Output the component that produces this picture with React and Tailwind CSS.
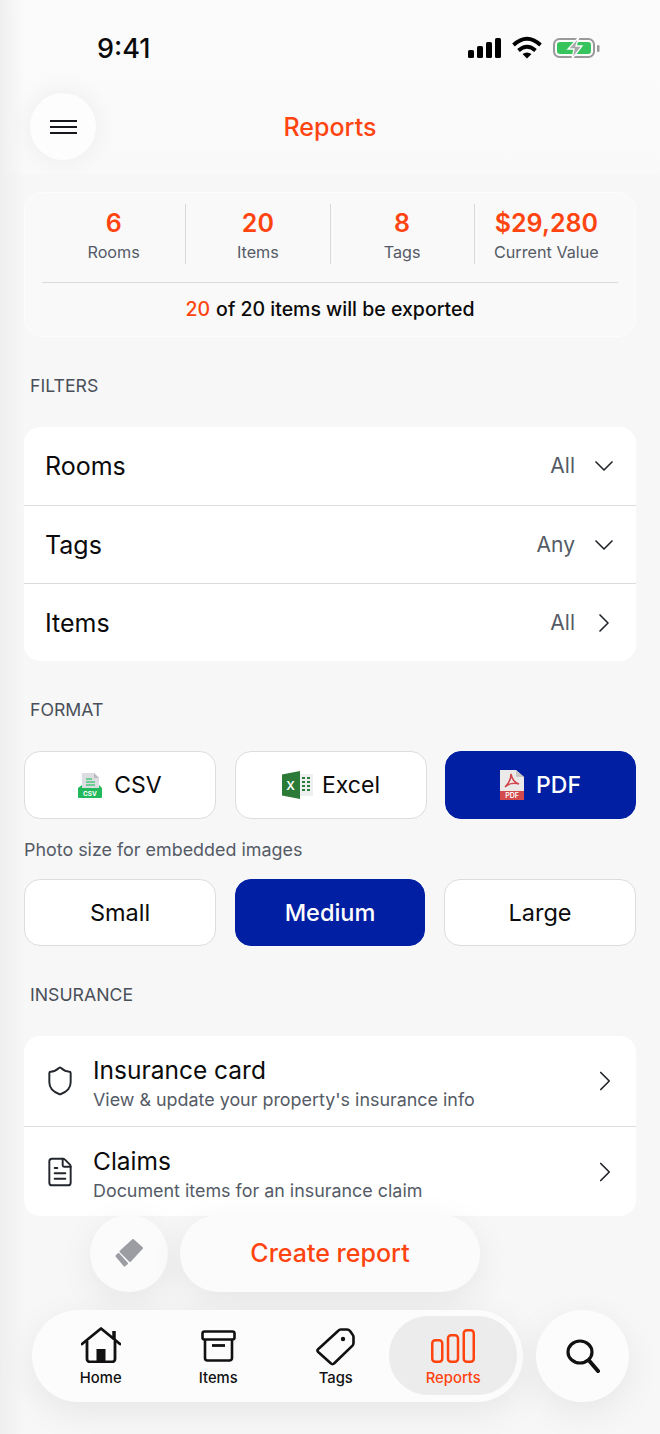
import React from 'react'
import { ChevronDown, ChevronRight, Shield, FileText } from 'lucide-react'

const stats = [
  { value: '6', label: 'Rooms' },
  { value: '20', label: 'Items' },
  { value: '8', label: 'Tags' },
  { value: '$29,280', label: 'Current Value' },
]

const filters = [
  { name: 'Rooms', value: 'All', Icon: ChevronDown },
  { name: 'Tags', value: 'Any', Icon: ChevronDown },
  { name: 'Items', value: 'All', Icon: ChevronRight },
]

const CsvIcon = () => (
  <svg width="24" height="25" viewBox="0 0 24 25">
    <path d="M4 0h12l5 5v12H4z" fill="#dcdde0" />
    <path d="M16 0l5 5h-5z" fill="#b9bbc0" />
    <path d="M8 6h6M8 9h9M8 12h9" stroke="#4fc67c" strokeWidth="1.3" />
    <path d="M0 15l4-3v3h17v-3l3 3v9a1 1 0 0 1-1 1H1a1 1 0 0 1-1-1z" fill="#22b85c" />
    <text x="12" y="23" fontSize="6.5" fontWeight="700" fill="#fff" textAnchor="middle" fontFamily="Inter, sans-serif">CSV</text>
  </svg>
)

const ExcelIcon = () => (
  <svg width="31" height="28" viewBox="0 0 31 28" className="-mr-[3px]">
    <rect x="14" y="3" width="17" height="22" fill="#eef0f0" />
    <path d="M20 7h3M25 7h3M20 11h3M25 11h3M20 15h3M25 15h3M20 19h3M25 19h3" stroke="#2e7d3c" strokeWidth="1.8" />
    <path d="M0 3.500L18 0v28L0 24.500z" fill="#2b7a38" />
    <text x="8.500" y="18.500" fontSize="12" fontWeight="600" fill="#fff" textAnchor="middle" fontFamily="Inter, sans-serif">X</text>
  </svg>
)

const PdfIcon = () => (
  <svg width="24" height="30" viewBox="0 0 24 30">
    <path d="M0 0h16l8 7v14H0z" fill="#eceae8" />
    <path d="M16 0l8 7h-8z" fill="#c9c6c3" />
    <path d="M11 4c0 5-2 9-6 13 3-3 9-5 14-3-4-1-7-5-8-10z" fill="none" stroke="#d2444a" strokeWidth="1.5" />
    <rect y="21" width="24" height="9" fill="#d2494e" />
    <text x="12" y="28.300" fontSize="7" fontWeight="600" fill="#fff" textAnchor="middle" fontFamily="Inter, sans-serif">PDF</text>
  </svg>
)

const SectionLabel = ({ children }) => (
  <div className="h-5 pl-[6px] text-[17.7px] leading-[22px] text-[#4a4f59]">{children}</div>
)

const OptionButton = ({ active, icon, short, className, children }) => (
  <div
    className={`flex items-center justify-center gap-[12px] rounded-[16px] border ${className} ${short ? 'h-[67px] text-[23.500px]' : 'h-[68px] text-[23px]'} ${
      active ? 'bg-[#001fa3] border-[#001fa3] text-white font-medium' : 'bg-white border-[#dddddd] text-[#0b0b0b]'
    }`}
  >
    {icon}
    <span>{children}</span>
  </div>
)

const InsuranceRow = ({ Icon, title, desc, border }) => (
  <div className={`flex items-center pl-[20px] pr-[14px] ${border ? 'h-[91px] border-b border-[#dcdcdc]' : 'h-[89px]'}`}>
    <Icon className="w-[32px] h-[32px] text-[#23262d] shrink-0" strokeWidth={1.45} />
    <div className="ml-[17px] flex-1 pt-[8px]">
      <div className="text-[24.500px] leading-[30px] text-[#0b0b0b]">{title}</div>
      <div className="text-[17.900px] leading-[30px] text-[#555b66]">{desc}</div>
    </div>
    <ChevronRight className="w-[34px] h-[34px] text-[#23262d]" strokeWidth={1.2} />
  </div>
)

const NavItem = ({ icon, label, active }) => (
  <div className={`w-[117.500px] flex flex-col items-center text-[14.800px] font-medium leading-[18px] ${active ? 'text-[#ff4410]' : 'text-[#111]'}`}>
    <div className="h-[40px]">{icon}</div>
    <span className="mt-[2px]">{label}</span>
  </div>
)

export default function App() {
  return (
    <div className="relative w-[660px] h-[1434px] overflow-hidden bg-[#f7f7f7] font-['Inter',sans-serif]">
      <div className="absolute inset-x-0 top-0 h-[174px] bg-gradient-to-b from-[#fbfbfb] to-[#f9f9f9]" />
      <div className="absolute inset-y-0 left-0 w-[24px] bg-gradient-to-r from-[#efefef] to-transparent" />

      <div className="relative">
        {/* status bar */}
        <div className="h-[93px] pl-[97px] pr-[60px] pt-[32px] flex justify-between items-start">
          <span className="text-[27px] leading-[34px] font-medium text-[#0a0a0a]">9:41</span>
          <svg width="133" height="26" viewBox="0 0 133 26" className="mt-[3px]">
            <rect x="1" y="15" width="6" height="8" rx="1.5" fill="#000" />
            <rect x="10" y="11" width="6" height="12" rx="1.5" fill="#000" />
            <rect x="19" y="7" width="6" height="16" rx="1.5" fill="#000" />
            <rect x="28" y="3" width="6" height="20" rx="1.5" fill="#000" />
            <path d="M46.500 10Q60 -2.500 73.500 10M51.500 15.500Q60 8 68.500 15.500" fill="none" stroke="#000" strokeWidth="3.800" />
            <path d="M55.500 19Q60 16 64.500 19L60 23.500z" fill="#000" />
            <rect x="87" y="4" width="40" height="18" rx="5.500" fill="none" stroke="#9a9a9a" strokeWidth="2" />
            <rect x="90" y="7" width="34" height="12" rx="3" fill="#37c45c" />
            <path d="M112 2L101 14H107L105 24L115 11H109z" fill="#a7a9ad" stroke="#fbfbfb" strokeWidth="1.300" />
            <rect x="130" y="10" width="2.500" height="7" rx="1.200" fill="#9a9a9a" />
          </svg>
        </div>

        {/* header */}
        <div className="relative h-[67px] flex items-center justify-center">
          <div className="absolute left-[30px] top-0 w-[66px] h-[67px] rounded-full bg-[#fdfdfd] shadow-[0_0_26px_rgba(0,0,0,0.06)] flex flex-col items-center justify-center gap-[4px]">
            <div className="w-[27px] h-[2px] bg-[#15171c]" />
            <div className="w-[27px] h-[2px] bg-[#15171c]" />
            <div className="w-[27px] h-[2px] bg-[#15171c]" />
          </div>
          <h1 className="pt-[2px] text-[25px] font-medium text-[#ff4410]">Reports</h1>
        </div>

        <div className="px-[24px] pt-[32px]">
          {/* summary */}
          <div className="h-[145px] rounded-[18px] bg-[#f9f9f9] border border-[#fdfdfd] px-[17px]">
            <div className="pt-[11px] h-[90px] flex border-b border-[#dbdbdb]">
              {stats.map((s, i) => (
                <div key={s.label} className={`flex-1 h-[60px] flex flex-col items-center ${i < 3 ? 'border-r border-[#d8d8d8]' : ''}`}>
                  <span className="pt-[2px] text-[25px] leading-[35px] font-semibold text-[#ff4410]">{s.value}</span>
                  <span className="-mt-px text-[16.200px] leading-[24px] text-[#555b66]">{s.label}</span>
                </div>
              ))}
            </div>
            <div className="h-[54px] flex items-center justify-center text-[19.500px] font-medium text-[#0b0b0b]">
              <span className="text-[#ff4410] mr-[6px]">20</span>of 20 items will be exported
            </div>
          </div>

          <div className="mt-[38px]"><SectionLabel>FILTERS</SectionLabel></div>

          {/* filters */}
          <div className="mt-[32px] rounded-[16px] bg-white">
            {filters.map((f, i) => (
              <div key={f.name} className={`h-[78px] flex items-center pl-[21px] pr-[16px] ${i > 0 ? 'border-t border-[#dcdcdc]' : ''}`}>
                <span className="flex-1 pt-[2px] text-[25px] text-[#0b0b0b]">{f.name}</span>
                <span className="text-[21px] text-[#555b66] mr-[13px]">{f.value}</span>
                <f.Icon className="w-[32px] h-[32px] text-[#23262d]" strokeWidth={1.25} />
              </div>
            ))}
          </div>

          <div className="mt-[38px]"><SectionLabel>FORMAT</SectionLabel></div>

          {/* format */}
          <div className="mt-[32px] flex">
            <OptionButton className="w-[192px] mr-[19px]" icon={<CsvIcon />}>CSV</OptionButton>
            <OptionButton className="w-[192px] mr-[18px]" icon={<ExcelIcon />}>Excel</OptionButton>
            <OptionButton className="w-[191px]" active icon={<PdfIcon />}>PDF</OptionButton>
          </div>

          <div className="h-[60px] pt-[2px] flex items-center text-[17.900px] text-[#555b66]">Photo size for embedded images</div>

          <div className="flex">
            <OptionButton className="w-[192px] mr-[19px]" short>Small</OptionButton>
            <OptionButton className="w-[190px] mr-[19px]" short active>Medium</OptionButton>
            <OptionButton className="w-[192px]" short>Large</OptionButton>
          </div>

          <div className="mt-[38px]"><SectionLabel>INSURANCE</SectionLabel></div>

          {/* insurance */}
          <div className="mt-[32px] rounded-[16px] bg-white">
            <InsuranceRow border Icon={Shield} title="Insurance card" desc="View & update your property's insurance info" />
            <InsuranceRow Icon={FileText} title="Claims" desc="Document items for an insurance claim" />
          </div>
        </div>
      </div>

      {/* floating actions */}
      <div className="absolute left-[90px] top-[1215px] w-[78px] h-[77px] rounded-full bg-[#fbfbfb] shadow-[0_10px_36px_rgba(0,0,0,0.07)] flex items-center justify-center">
        <svg width="30" height="30" viewBox="0 0 30 30" fill="#9c9da3" stroke="#9c9da3" strokeWidth="2" strokeLinejoin="round" className="-mt-[2px]">
          <path d="M19 2L28 10L16 23L6.500 13.500z" />
          <path d="M2.500 18L4.500 16L13 25.500L10.500 27.500z" />
        </svg>
      </div>
      <div className="absolute left-[180px] top-[1215px] w-[300px] h-[77px] rounded-[38px] bg-[#fbfbfb] shadow-[0_10px_36px_rgba(0,0,0,0.07)] flex items-center justify-center text-[25px] font-medium text-[#ff4410]">
        Create report
      </div>

      {/* tab bar */}
      <div className="absolute left-[32px] top-[1310px] w-[491px] h-[92px] rounded-[46px] bg-[#fcfcfc] shadow-[0_10px_36px_rgba(0,0,0,0.07)] pl-[10px] pt-[17px]">
        <div className="absolute left-[357px] top-[6px] w-[128px] h-[79px] rounded-[39px] bg-[#ececec]" />
        <div className="relative flex">
          <NavItem label="Home" icon={
            <svg width="40" height="36" viewBox="0 0 40 36" fill="none" stroke="#111" strokeWidth="2.800" strokeLinejoin="round">
              <path d="M1 17L20 1.500l19 15.500" strokeLinecap="round" />
              <path d="M6 14v18a3 3 0 0 0 3 3h22a3 3 0 0 0 3-3V14" />
              <path d="M33 4v8" strokeWidth="3.500" />
              <rect x="15.500" y="22" width="9" height="13" fill="#111" stroke="none" />
            </svg>
          } />
          <NavItem label="Items" icon={
            <svg width="35" height="32" viewBox="0 0 35 32" fill="none" stroke="#111" strokeWidth="2.600" strokeLinejoin="round" className="mt-[3px]">
              <rect x="1.500" y="1.500" width="32" height="8" rx="2" />
              <path d="M4 9.500v18.500a2.500 2.500 0 0 0 2.500 2.500h22a2.500 2.500 0 0 0 2.500-2.500V9.500" />
              <path d="M11 15.500h13" strokeWidth="2.800" />
            </svg>
          } />
          <NavItem label="Tags" icon={
            <svg width="39" height="38" viewBox="0 0 39 38" fill="none" stroke="#111" strokeWidth="2.600" strokeLinejoin="round" className="mt-px">
              <path d="M25 1.500h6a4 4 0 0 1 3 1.500l2.500 3.500a4 4 0 0 1 1 2.500v6a4 4 0 0 1-1 2.600L18 35.500a2 2 0 0 1-3 0L2.200 24a2 2 0 0 1-.1-2.800L22 3a4 4 0 0 1 3-1.500z" />
              <circle cx="27" cy="11" r="2.200" fill="#111" stroke="none" />
            </svg>
          } />
          <NavItem active label="Reports" icon={
            <svg width="44" height="34" viewBox="0 0 44 34" fill="none" stroke="#ff4410" strokeWidth="2.500" className="mt-[2px]">
              <rect x="1.250" y="11.250" width="10" height="21.500" rx="3" />
              <rect x="17" y="6.250" width="10" height="26.500" rx="3" />
              <rect x="32.750" y="1.250" width="10" height="31.500" rx="3" />
            </svg>
          } />
        </div>
      </div>

      <div className="absolute left-[536px] top-[1310px] w-[93px] h-[92px] rounded-full bg-[#fcfcfc] shadow-[0_10px_36px_rgba(0,0,0,0.07)] flex items-center justify-center">
        <svg width="34" height="34" viewBox="0 0 34 34" fill="none" stroke="#111" strokeLinecap="round">
          <ellipse cx="14" cy="13" rx="12" ry="11" strokeWidth="3.200" />
          <path d="M23 21.500L32 32" strokeWidth="4" />
        </svg>
      </div>
    </div>
  )
}
